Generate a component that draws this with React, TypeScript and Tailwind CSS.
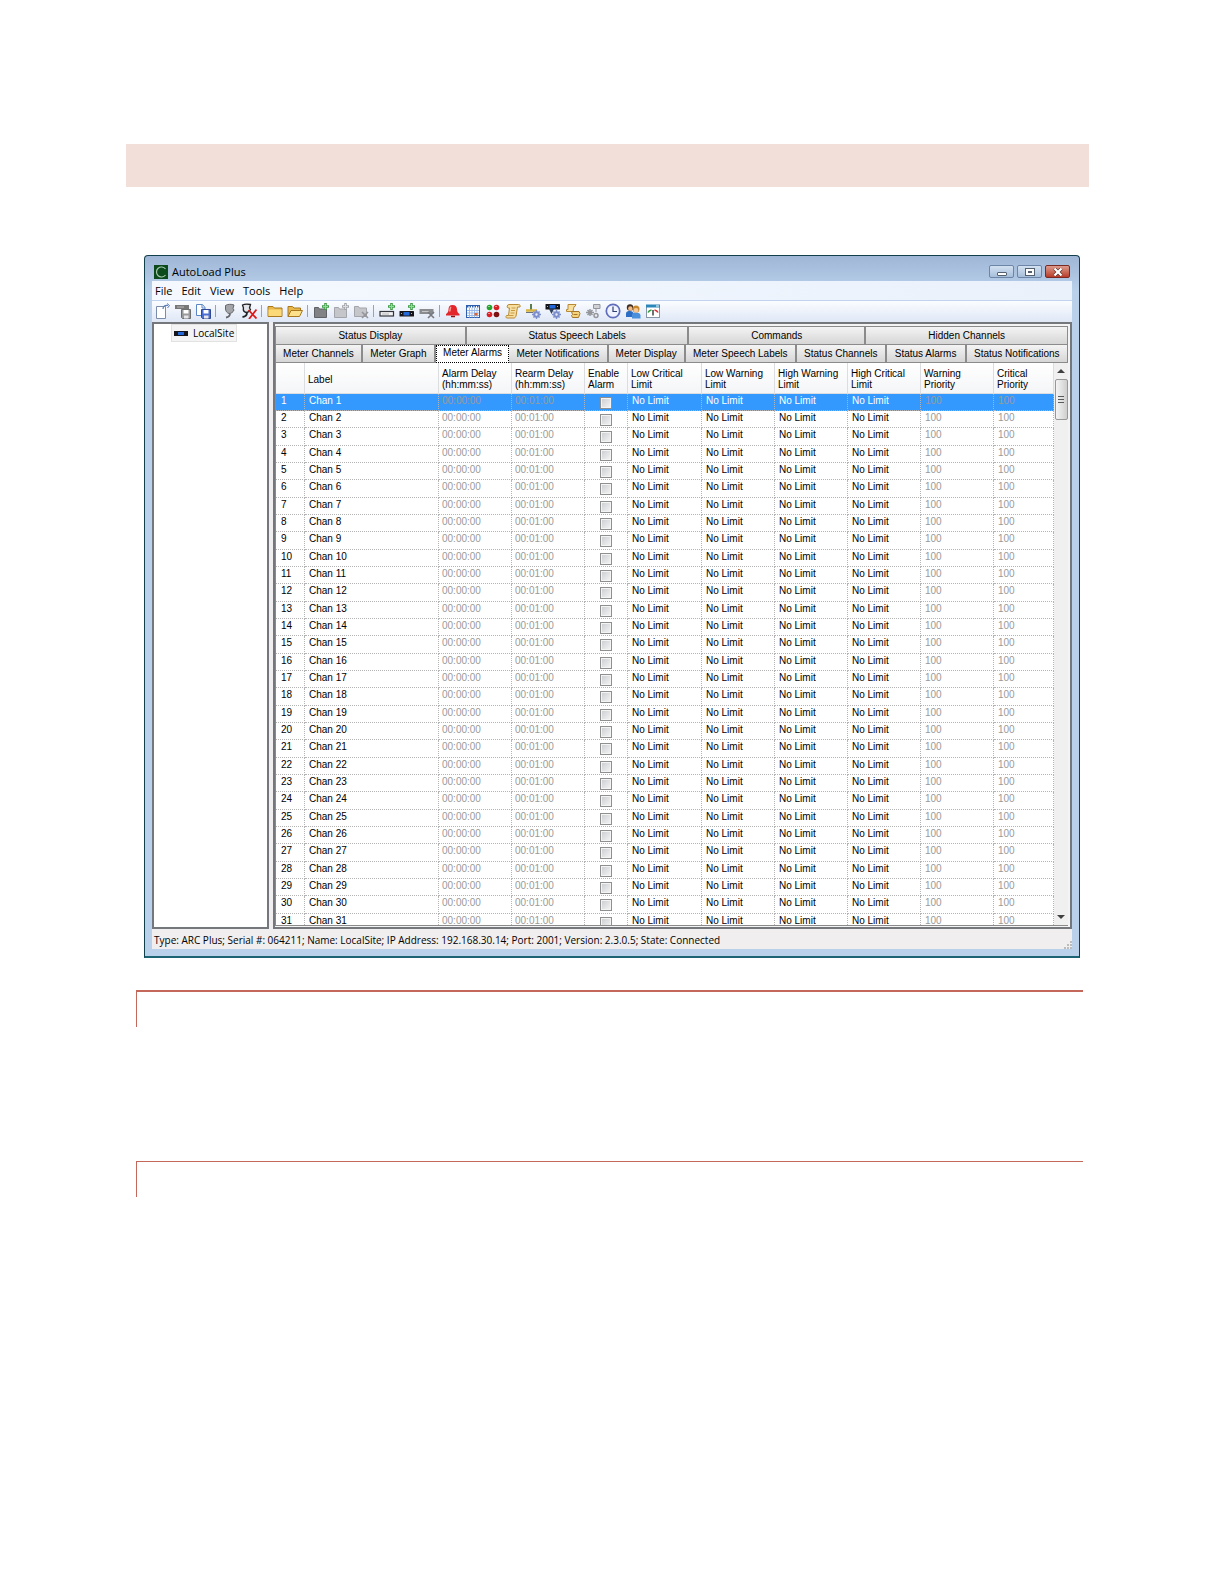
import { useState, type ReactNode } from 'react';

interface TabProps {
  label: string;
  className: string;
  active: boolean;
  onSelect: (label: string) => void;
}

const MENUS = ['File', 'Edit', 'View', 'Tools', 'Help'];

const TOP_TABS = [
  { label: 'Status Display', className: 'flex-191' },
  { label: 'Status Speech Labels', className: 'flex-223' },
  { label: 'Commands', className: 'flex-177' },
  { label: 'Hidden Channels', className: 'flex-203' },
];

const BOTTOM_TABS = [
  { label: 'Meter Channels', className: 'flex-87' },
  { label: 'Meter Graph', className: 'flex-73' },
  { label: 'Meter Alarms', className: 'flex-73' },
  { label: 'Meter Notifications', className: 'flex-100' },
  { label: 'Meter Display', className: 'flex-77' },
  { label: 'Meter Speech Labels', className: 'flex-112' },
  { label: 'Status Channels', className: 'flex-90' },
  { label: 'Status Alarms', className: 'flex-80' },
  { label: 'Status Notifications', className: 'flex-103' },
];

const COLUMNS = [
  { lines: [''], width: 'w-[29px]' },
  { lines: ['Label'], width: '' },
  { lines: ['Alarm Delay', '(hh:mm:ss)'], width: 'w-[73px]' },
  { lines: ['Rearm Delay', '(hh:mm:ss)'], width: 'w-[73px]' },
  { lines: ['Enable', 'Alarm'], width: 'w-[43px]' },
  { lines: ['Low Critical', 'Limit'], width: 'w-[74px]' },
  { lines: ['Low Warning', 'Limit'], width: 'w-[73px]' },
  { lines: ['High Warning', 'Limit'], width: 'w-[73px]' },
  { lines: ['High Critical', 'Limit'], width: 'w-[73px]' },
  { lines: ['Warning', 'Priority'], width: 'w-[73px]' },
  { lines: ['Critical', 'Priority'], width: 'w-[60px]' },
];

const CHANNELS = Array.from({ length: 31 }, (_, i) => i + 1);

const Icon = ({ children }: { children: ReactNode }) => (
  <svg viewBox="0 0 16 16" className="w-4 h-4" fill="none" aria-hidden="true">
    {children}
  </svg>
);

const Plus = () => (
  <g>
    <path d="M12.5 0v7M9 3.5h7" stroke="#3f9c48" strokeWidth="2.6" />
    <path d="M12.5 1v5M10 3.5h5" stroke="#8fdc96" strokeWidth="1.2" />
  </g>
);

const Gear = ({ color }: { color: string }) => (
  <g stroke={color}>
    <circle cx="11.5" cy="11.5" r="2.2" strokeWidth="2" />
    <path d="M11.5 7v2M11.5 14v2M7 11.5h2M14 11.5h2M8.4 8.4l1.3 1.3M13.3 13.3l1.3 1.3M14.6 8.4l-1.3 1.3M8.4 14.6l1.3-1.3" strokeWidth="1.4" />
  </g>
);

const Floppy = ({ body, edge }: { body: string; edge: string }) => (
  <g>
    <path d="M6.5 6.5h9v9h-8l-1-1z" fill={body} stroke={edge} />
    <path d="M8.5 7h5v3.5h-5z" fill="#fff" />
    <path d="M9 12.5h4.5v3H9z" fill="#e6e6ea" />
  </g>
);

const Device = ({ y = 8 }: { y?: number }) => (
  <g>
    <rect x="0.5" y={y} width="14.5" height="5.5" rx="0.5" fill="#15161c" />
    <rect x="4.5" y={y + 1} width="6" height="3.5" fill="#2368d8" />
    <rect x="2" y={y + 2} width="1" height="1" fill="#9db4d8" />
    <rect x="12" y={y + 2} width="1" height="1" fill="#9db4d8" />
  </g>
);

const Scroll = () => (
  <g>
    <path d="M4 1.5h9.5c1.5 0 2 1 1.5 2.5h-2.5L11 13c-.4 1-1 2-2 2H2c-1.2 0-1.5-1.5-.5-2.5h2L4.5 5H3C1.5 4.5 2 1.5 4 1.5z" fill="#f7dfa0" stroke="#b98a35" />
    <path d="M6.5 5h4M6 7.5h4M5.5 10h4M3.5 12.5h5" stroke="#c79a48" />
  </g>
);

const TOOL_GROUPS: { name: string; art: ReactNode }[][] = [
  [
    {
      name: 'New',
      art: (
        <>
          <path d="M1.5 3.5h9v12h-9z" fill="#fff" stroke="#7a8cab" />
          <path d="M8 6c0-3 2-4 5-3.5" stroke="#5b7cb8" strokeWidth="1.2" />
          <path d="M12 .5l2.5 2-2 2.5" stroke="#5b7cb8" />
        </>
      ),
    },
    {
      name: 'Save Device',
      art: (
        <>
          <rect x="0" y="2" width="14" height="4" fill="#777" />
          <path d="M2 4h7" stroke="#bbb" />
          <Floppy body="#9a9a9a" edge="#6e6e6e" />
        </>
      ),
    },
    {
      name: 'Save As',
      art: (
        <>
          <path d="M1.5 1.5h6l2.5 3v8H1.5z" fill="#fff" stroke="#5b86c8" />
          <path d="M7 2v3h3" stroke="#5b86c8" />
          <Floppy body="#4a6fd0" edge="#2e4894" />
        </>
      ),
    },
  ],
  [
    {
      name: 'Connect',
      art: (
        <>
          <path d="M4.5 2.5c2-1.5 6-1.5 8.5-.5l-1 3.5 1 1.5c-1 2.5-3 3.5-5 3.5C6 10 4.5 8 4.5 6z" fill="#a3a5a9" stroke="#65676b" />
          <path d="M9 10.5c0 2-1 3.5-4 4" stroke="#65676b" strokeWidth="1.8" />
        </>
      ),
    },
    {
      name: 'Disconnect',
      art: (
        <>
          <path d="M1.5 2c2-1 5-1 8-.5L8.5 5l1 1.5c-1 2-2.5 3-4.5 3C3 9 2 7 2.5 5z" fill="#e2e4e8" stroke="#202226" strokeWidth="1.3" />
          <path d="M6 9.5c0 2.5-1 4-4.5 4.5" stroke="#202226" strokeWidth="1.8" />
          <path d="M7.5 7l8 8.5M15.5 6.5L8 16" stroke="#e01818" strokeWidth="1.8" />
        </>
      ),
    },
  ],
  [
    {
      name: 'Folder',
      art: (
        <>
          <path d="M1 3.5h5L7.5 5H15v8.5H1z" fill="#e9b84a" stroke="#a87820" />
          <path d="M1.5 6.5h13V13h-13z" fill="#fbd878" />
        </>
      ),
    },
    {
      name: 'Open Folder',
      art: (
        <>
          <path d="M1 13.5v-10h4.5L7 5h6.5v3" fill="#e9b84a" stroke="#a87820" />
          <path d="M1 13.5l3-6h11.5l-3 6z" fill="#fde08a" stroke="#a87820" />
        </>
      ),
    },
  ],
  [
    {
      name: 'Add Site',
      art: (
        <>
          <path d="M1.5 4.5h4l1 1.5h7v8.5h-12z" fill="#808285" stroke="#5f6164" />
          <Plus />
        </>
      ),
    },
    {
      name: 'Add Group',
      art: (
        <>
          <path d="M1.5 4.5h4l1 1.5h7v8.5h-12z" fill="#c4c6ca" stroke="#a3a5aa" />
          <path d="M12.5 0v7M9 3.5h7" stroke="#a3a5aa" strokeWidth="2.6" />
          <path d="M12.5 1v5M10 3.5h5" stroke="#dcdde0" />
        </>
      ),
    },
    {
      name: 'Delete Group',
      art: (
        <>
          <path d="M1.5 3.5h4l1 1.5h7v8.5h-12z" fill="#c4c6ca" stroke="#a3a5aa" />
          <path d="M9 9l6 6M15 9l-6 6" stroke="#94969b" strokeWidth="1.6" />
        </>
      ),
    },
  ],
  [
    {
      name: 'Add Unit',
      art: (
        <>
          <rect x="1" y="8.5" width="13.5" height="4.5" fill="#f2f2f2" stroke="#33353a" strokeWidth="1.2" />
          <path d="M3 11h7" stroke="#b5b7bc" />
          <Plus />
        </>
      ),
    },
    {
      name: 'Add Device',
      art: (
        <>
          <Device />
          <Plus />
        </>
      ),
    },
    {
      name: 'Delete Device',
      art: (
        <>
          <rect x="0.5" y="6" width="14" height="5" fill="#8a8c90" />
          <path d="M3 8.5h7" stroke="#c4c6ca" />
          <path d="M9 9l6 6M15 9l-6 6" stroke="#77797e" strokeWidth="1.6" />
        </>
      ),
    },
  ],
  [
    {
      name: 'Alarms',
      art: (
        <>
          <path d="M7.5 2c-3 0-4 2-4 4.5 0 2-1 3.5-2.5 4.5v1.5h13.5V11C13 10 12 8.5 12 6.5 12 4 10.5 2 7.5 2z" fill="#e3262c" />
          <path d="M6 4c-1 1-1 3-1.2 4.5" stroke="#ff9a90" strokeWidth="1.5" />
          <path d="M6 13.5h4" stroke="#8d1014" strokeWidth="1.5" />
        </>
      ),
    },
    {
      name: 'Schedule',
      art: (
        <>
          <rect x="1.5" y="2.5" width="13" height="12" fill="#fff" stroke="#2d5fae" />
          <path d="M2 3.5h12" stroke="#2d5fae" strokeWidth="2" strokeDasharray="1.5 1" />
          <path d="M2 7.5h12M2 10h12M2 12.5h12M4.5 5v9.5M7 5v9.5M9.5 5v9.5M12 5v9.5" stroke="#8fb2ea" strokeWidth="0.9" />
          <rect x="9.5" y="10" width="3" height="2.5" fill="#e2622a" />
        </>
      ),
    },
    {
      name: 'Status Lights',
      art: (
        <>
          <circle cx="4.5" cy="4.5" r="2.8" fill="#27a22d" />
          <circle cx="11.5" cy="4.5" r="2.8" fill="#d81f26" />
          <circle cx="4.5" cy="11.5" r="2.8" fill="#d81f26" />
          <circle cx="11.5" cy="11.5" r="2.8" fill="#7d1013" />
          <path d="M3.5 3.5h1M10.5 3.5h1M3.5 10.5h1" stroke="#fff" />
        </>
      ),
    },
    { name: 'Macros', art: <Scroll /> },
    {
      name: 'Command Options',
      art: (
        <>
          <path d="M6 1v6" stroke="#5f7d4a" strokeWidth="2" />
          <path d="M1 7.5h11" stroke="#d8b440" strokeWidth="2.5" />
          <path d="M1 9.5h7" stroke="#6b7280" />
          <Gear color="#7c8ecb" />
        </>
      ),
    },
    {
      name: 'Device Options',
      art: (
        <>
          <Device y={1} />
          <path d="M4 6l2.5 5L9 6z" fill="#30405e" />
          <Gear color="#7c8ecb" />
        </>
      ),
    },
    {
      name: 'Macro Options',
      art: (
        <>
          <path d="M3 1.5h8l-1 2H9l-1 5H1.5v-2H3z" fill="#f7dfa0" stroke="#b98a35" />
          <path d="M6.5 8.5H14l1 2-1.5 4h-6l-1-2 1-1z" fill="#f5d27c" stroke="#a5762a" />
          <path d="M8.5 11.5h4" stroke="#a5762a" />
        </>
      ),
    },
    {
      name: 'Site Options',
      art: (
        <>
          <path d="M8.5 1.5H15v4H8.5z" fill="#d0d2d6" stroke="#94969b" />
          <path d="M1 9.5h8M5 6v7M2.5 7l5 5M7.5 7l-5 5" stroke="#94969b" strokeWidth="1.5" />
          <circle cx="11" cy="12.5" r="2" stroke="#94969b" strokeWidth="1.5" />
          <path d="M11 6v3" stroke="#94969b" />
        </>
      ),
    },
    {
      name: 'Clock',
      art: (
        <>
          <circle cx="8" cy="8" r="6.7" fill="#eef3ff" stroke="#5f6dbb" strokeWidth="1.7" />
          <path d="M8 3.5v5h4" stroke="#36406e" strokeWidth="1.2" />
        </>
      ),
    },
    {
      name: 'Users',
      art: (
        <>
          <path d="M1 14v-3.5C1 8.5 3 8 5 8s3.5 1 3.5 3v3z" fill="#2c6cc4" />
          <circle cx="5" cy="4.5" r="3.2" fill="#3c2c20" />
          <circle cx="5.3" cy="5.5" r="2.2" fill="#f0b888" />
          <path d="M7 15.5V12c0-2 1.5-2.5 4-2.5s4.5 1 4.5 3v3z" fill="#4a90dc" />
          <circle cx="11" cy="6" r="3.5" fill="#c8862c" />
          <circle cx="11" cy="7.2" r="2.3" fill="#f6c898" />
        </>
      ),
    },
    {
      name: 'Meters',
      art: (
        <>
          <rect x="1.5" y="2.5" width="13" height="12" fill="#fff" stroke="#8795a8" />
          <path d="M1 3h14" stroke="#2a86b8" strokeWidth="3" />
          <path d="M11 3h3" stroke="#fff" />
          <path d="M3 9.5c.7-1.5 1.8-2.3 3.5-2.5" stroke="#2e9e3a" strokeWidth="1.6" />
          <path d="M9.500 7c1.7.2 2.8 1 3.5 2.5" stroke="#d8303a" strokeWidth="1.6" />
          <path d="M8 7v5.5" stroke="#202226" strokeWidth="1.3" />
        </>
      ),
    },
  ],
];

const Tab = ({ label, className, active, onSelect }: TabProps) => (
  <button
    type="button"
    role="tab"
    aria-selected={active}
    onClick={() => onSelect(label)}
    className={`min-w-0 h-full whitespace-nowrap text-center ${className} ${
      active
        ? 'bg-white border border-dotted border-black pb-1'
        : 'border-r-2 border-b border-[#8b8b8b] bg-linear-to-b from-[#f4f4f4] to-[#d6d6d6] last:border-r'
    }`}
  >
    {label}
  </button>
);

const TitleBar = () => (
  <div className="flex items-center h-[25px] pt-[6px] pl-[9px] pr-[9px]">
    <svg viewBox="0 0 14 14" className="w-[14px] h-[14px]" aria-hidden="true">
      <rect width="14" height="14" fill="#0c4a1c" />
      <path d="M11.5 4A5 5 0 1 0 11.5 10" fill="none" stroke="#a5cbad" strokeWidth="1.2" />
    </svg>
    <h1 className="pl-1 text-[11px] leading-4">AutoLoad Plus</h1>
    <div className="flex gap-[3px] ml-auto">
      <button type="button" aria-label="Minimize" className="flex items-center justify-center w-[25px] h-[13px] rounded-[2px] border border-[#6d86a8] bg-linear-to-b from-[#d3e1f2] to-[#a6bedb]">
        <span className="w-[10px] h-1 mt-1 rounded-[1px] border border-[#55606e] bg-white" />
      </button>
      <button type="button" aria-label="Maximize" className="flex items-center justify-center w-[25px] h-[13px] rounded-[2px] border border-[#6d86a8] bg-linear-to-b from-[#d3e1f2] to-[#a6bedb]">
        <span className="w-2 h-[6px] border-2 border-white bg-[#55606e] outline outline-[#55606e]" />
      </button>
      <button type="button" aria-label="Close" className="flex items-center justify-center w-[25px] h-[13px] rounded-[2px] border border-[#7a2a24] bg-linear-to-b from-[#dc9a8c] to-[#b83a28]">
        <svg viewBox="0 0 10 8" className="w-[10px] h-2" aria-hidden="true">
          <path d="M1.5 .5l7 7M8.5 .5l-7 7" stroke="#55302c" strokeWidth="3.4" />
          <path d="M1.5 .5l7 7M8.5 .5l-7 7" stroke="#fff" strokeWidth="2.2" />
        </svg>
      </button>
    </div>
  </div>
);

const Toolbar = () => (
  <div role="toolbar" aria-label="Tools" className="flex items-center h-[22px] px-[1px] pb-[1px] border-t border-[#c3d2ee] bg-linear-to-b from-[#fbfdff] to-[#dfe7f6]">
    {TOOL_GROUPS.map((group, index) => (
      <div key={group[0].name} className="flex items-center">
        {index > 0 && <span className="w-px h-3 mr-[3px] ml-[2px] bg-[#8fa3d0]" />}
        {group.map((tool) => (
          <button key={tool.name} type="button" aria-label={tool.name} className="flex justify-center w-5">
            <Icon>{tool.art}</Icon>
          </button>
        ))}
      </div>
    ))}
  </div>
);

const ChannelTable = () => {
  const [selected, setSelected] = useState(1);

  return (
    <table className="w-full table-fixed border-separate border-spacing-0">
      <colgroup>
        {COLUMNS.map((column, index) => (
          <col key={index} className={column.width} />
        ))}
      </colgroup>
      <thead>
        <tr className="h-[31px] bg-linear-to-b from-white to-[#f4f5f7]">
          {COLUMNS.map((column, index) => (
            <th key={index} scope="col" className="p-0 pt-[2px] pl-[3px] text-left font-normal leading-[11px] whitespace-nowrap border-r border-b border-[#dcdde0]">
              {column.lines.map((line) => (
                <span key={line} className="block">{line}</span>
              ))}
            </th>
          ))}
        </tr>
      </thead>
      <tbody>
        {CHANNELS.map((channel) => {
          const active = channel === selected;
          const cell = 'p-0 align-top whitespace-nowrap border-r border-b border-dotted border-[#b4b4b4]';
          const limit = `${cell} pl-1 ${active ? 'text-white' : 'text-black'}`;
          const muted = `${cell} pl-[3px] text-[#9a9a9a]`;
          return (
            <tr
              key={channel}
              onClick={() => setSelected(channel)}
              className={`h-[17px] nth-[3n]:h-[18px] leading-[13px] ${active ? 'bg-[#3399ff]' : 'bg-white'}`}
            >
              <td className={`${cell} pl-[5px] ${active ? 'text-white' : 'text-black'}`}>{channel}</td>
              <td className={limit}>Chan {channel}</td>
              <td className={muted}>00:00:00</td>
              <td className={muted}>00:01:00</td>
              <td className={cell}>
                <input
                  type="checkbox"
                  aria-label={`Enable alarm for Chan ${channel}`}
                  className="block appearance-none w-3 h-3 mt-[3px] mx-auto border border-[#8e8f8f] bg-linear-to-br from-[#c9ccd0] to-[#f6f6f6] outline -outline-offset-2 outline-[#f4f4f4] checked:bg-[#3a5a8c]"
                />
              </td>
              <td className={limit}>No Limit</td>
              <td className={limit}>No Limit</td>
              <td className={limit}>No Limit</td>
              <td className={limit}>No Limit</td>
              <td className={limit.replace(/text-(white|black)/, 'text-[#9a9a9a]')}>100</td>
              <td className={limit.replace(/text-(white|black)/, 'text-[#9a9a9a]')}>100</td>
            </tr>
          );
        })}
      </tbody>
    </table>
  );
};

const ScrollBar = () => (
  <div className="flex flex-col items-center w-[14px] shrink-0 bg-[#f0f0f0]">
    <button type="button" aria-label="Scroll up" className="flex items-center justify-center w-full h-4">
      <span className="border-x-4 border-b-4 border-x-transparent border-b-[#404040]" />
    </button>
    <div className="flex flex-col items-center justify-center gap-[2px] w-[13px] h-[41px] rounded-[2px] border border-[#979797] bg-linear-to-r from-[#f5f5f5] to-[#cfcfcf]">
      <span className="w-[6px] h-px bg-[#5a5a5a]" />
      <span className="w-[6px] h-px bg-[#5a5a5a]" />
      <span className="w-[6px] h-px bg-[#5a5a5a]" />
    </div>
    <button type="button" aria-label="Scroll down" className="flex items-center justify-center w-full h-4 mt-auto">
      <span className="border-x-4 border-t-4 border-x-transparent border-t-[#404040]" />
    </button>
  </div>
);

const App = () => {
  const [tab, setTab] = useState('Meter Alarms');

  return (
    <main className="min-h-screen bg-white pt-36 text-black">
      <div className="h-[43px] ml-[126px] mr-[135px] bg-[#f3dfda]" />

      <section className="mx-36 mt-[68px] rounded-t-[4px] border border-b-2 border-[#123f4c] border-b-[#1c6473] bg-linear-to-b from-[#9fb6d6] to-[#b9d1ea] to-5% font-['Open_Sans',sans-serif]">
        <TitleBar />
        <div className="mx-[7px] mb-[7px] bg-[#f0eeee]">
          <nav className="flex items-center h-[19px] gap-[9px] pl-[3px] bg-linear-to-r from-[#f5f9ff] to-[#eaf1fb] text-[11px] leading-4">
            {MENUS.map((menu) => (
              <button key={menu} type="button">{menu}</button>
            ))}
          </nav>
          <Toolbar />

          <div className="flex gap-1 h-[607px]">
            <aside className="w-[117px] shrink-0 border-2 border-[#74777c] bg-white">
              <button type="button" className="flex items-center gap-[5px] h-[18px] ml-[17px] px-[2px] border border-[#e2e2e2] bg-[#f4f4f4] text-[10px] leading-4">
                <svg viewBox="0 0 14 5" className="w-[14px] h-[5px]" aria-hidden="true">
                  <rect width="14" height="5" fill="#15161c" />
                  <rect x="4" y="1" width="6" height="3" fill="#2368d8" />
                </svg>
                LocalSite
              </button>
            </aside>

            <div className="flex flex-col flex-1 min-w-0 border-2 border-[#74777c] bg-[#f4f4f4] pt-[2px] pr-[2px] pb-[1px] font-['Liberation_Sans',sans-serif] text-[10px] leading-[14px]">
              <div role="tablist" aria-label="Channel views" className="shrink-0 border-l border-[#8b8b8b]">
                <div className="flex h-[19px] border-t border-[#8b8b8b]">
                  {TOP_TABS.map((item) => (
                    <Tab key={item.label} {...item} active={tab === item.label} onSelect={setTab} />
                  ))}
                </div>
                <div className="flex h-[18px]">
                  {BOTTOM_TABS.map((item) => (
                    <Tab key={item.label} {...item} active={tab === item.label} onSelect={setTab} />
                  ))}
                </div>
              </div>
              <div className="flex flex-1 min-h-0 border-b border-l border-[#8b8b8b] bg-white">
                <div className="flex-1 min-w-0 overflow-hidden">
                  <ChannelTable />
                </div>
                <ScrollBar />
              </div>
            </div>
          </div>

          <footer className="flex items-center justify-between h-5 pt-[2px] pl-[2px] text-[10px] leading-4">
            <p>Type: ARC Plus; Serial #: 064211; Name: LocalSite; IP Address: 192.168.30.14; Port: 2001; Version: 2.3.0.5; State: Connected</p>
            <svg viewBox="0 0 8 8" className="self-end w-2 h-2" aria-hidden="true">
              <path d="M6 0h2v2H6zM3 3h2v2H3zM6 3h2v2H6zM0 6h2v2H0zM3 6h2v2H3zM6 6h2v2H6z" fill="#bdbcbc" />
            </svg>
          </footer>
        </div>
      </section>

      <div className="h-[37px] ml-[136px] mr-[141px] mt-8 border-t-2 border-l border-[#c4685c]" />
      <div className="h-9 ml-[136px] mr-[141px] mt-[134px] border-t border-l border-[#c4685c]" />
    </main>
  );
};

export default App;
